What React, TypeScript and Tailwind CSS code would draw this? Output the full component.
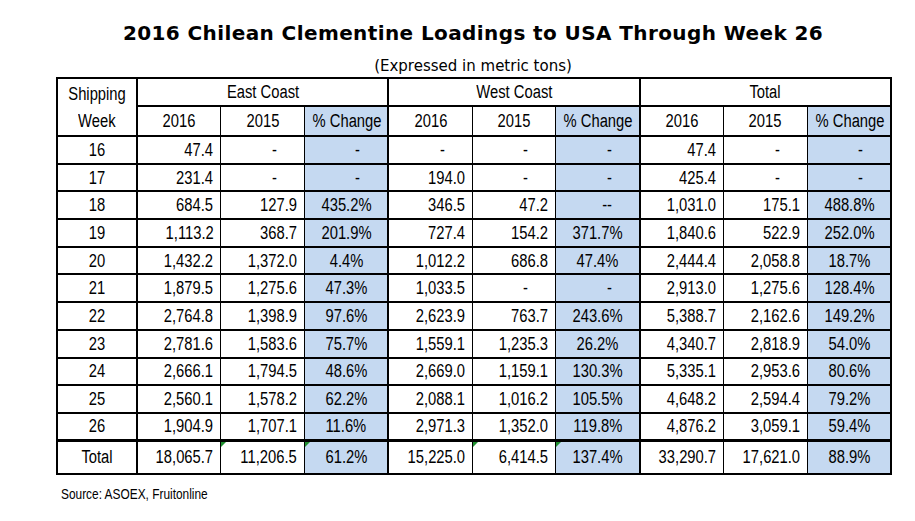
type Cell = string;
type Row = { week: string; east: Cell[]; west: Cell[]; total: Cell[] };

const rows: Row[] = [
  { week: "16", east: ["47.4", "-", "-"], west: ["-", "-", "-"], total: ["47.4", "-", "-"] },
  { week: "17", east: ["231.4", "-", "-"], west: ["194.0", "-", "-"], total: ["425.4", "-", "-"] },
  { week: "18", east: ["684.5", "127.9", "435.2%"], west: ["346.5", "47.2", "--"], total: ["1,031.0", "175.1", "488.8%"] },
  { week: "19", east: ["1,113.2", "368.7", "201.9%"], west: ["727.4", "154.2", "371.7%"], total: ["1,840.6", "522.9", "252.0%"] },
  { week: "20", east: ["1,432.2", "1,372.0", "4.4%"], west: ["1,012.2", "686.8", "47.4%"], total: ["2,444.4", "2,058.8", "18.7%"] },
  { week: "21", east: ["1,879.5", "1,275.6", "47.3%"], west: ["1,033.5", "-", "-"], total: ["2,913.0", "1,275.6", "128.4%"] },
  { week: "22", east: ["2,764.8", "1,398.9", "97.6%"], west: ["2,623.9", "763.7", "243.6%"], total: ["5,388.7", "2,162.6", "149.2%"] },
  { week: "23", east: ["2,781.6", "1,583.6", "75.7%"], west: ["1,559.1", "1,235.3", "26.2%"], total: ["4,340.7", "2,818.9", "54.0%"] },
  { week: "24", east: ["2,666.1", "1,794.5", "48.6%"], west: ["2,669.0", "1,159.1", "130.3%"], total: ["5,335.1", "2,953.6", "80.6%"] },
  { week: "25", east: ["2,560.1", "1,578.2", "62.2%"], west: ["2,088.1", "1,016.2", "105.5%"], total: ["4,648.2", "2,594.4", "79.2%"] },
  { week: "26", east: ["1,904.9", "1,707.1", "11.6%"], west: ["2,971.3", "1,352.0", "119.8%"], total: ["4,876.2", "3,059.1", "59.4%"] },
];

const totals: Row = {
  week: "Total",
  east: ["18,065.7", "11,206.5", "61.2%"],
  west: ["15,225.0", "6,414.5", "137.4%"],
  total: ["33,290.7", "17,621.0", "88.9%"],
};

const comic = "font-['DejaVu_Sans',sans-serif]";

// Arial Narrow isn't around, so squeeze Liberation Sans instead
function N({ children, align = "center" }: { children: React.ReactNode; align?: "left" | "right" | "center" }) {
  const origin = align === "right" ? "origin-right" : align === "left" ? "origin-left" : "origin-center";
  return <span className={`inline-block whitespace-nowrap scale-x-[0.82] ${origin}`}>{children}</span>;
}

function Flag() {
  // little green comment marker Excel puts in the corner
  return (
    <span className="absolute left-0 top-0 w-0 h-0 border-t-[5px] border-r-[5px] border-t-[#1f8f2f] border-r-transparent" />
  );
}

function DataCells({ vals, flags, last }: { vals: Cell[]; flags?: boolean; last?: boolean }) {
  const [a, b, pct] = vals;
  const isDash = (v: string) => v.startsWith("-");
  return (
    <>
      <td className={`border-l-2 border-l-black relative text-right ${isDash(a) ? "pr-[27px]" : "pr-[7px]"}`}>
        <N align="right">{a}</N>
      </td>
      <td className={`border-l border-l-black relative text-right ${isDash(b) ? "pr-[27px]" : "pr-[7px]"}`}>
        {flags && <Flag />}
        <N align="right">{b}</N>
      </td>
      <td
        className={`border-l border-l-black relative bg-[#c5d9f1] ${isDash(pct) ? "text-right pr-[27px]" : "text-center"} ${last ? "border-r-2 border-r-black" : ""}`}
      >
        {flags && <Flag />}
        <N align={isDash(pct) ? "right" : "center"}>{pct}</N>
      </td>
    </>
  );
}

function HeaderGroup() {
  return (
    <>
      <td className="text-center border-l-2 border-l-black"><N>2016</N></td>
      <td className="text-center border-l border-l-black"><N>2015</N></td>
      <td className="text-center border-l border-l-black bg-[#c5d9f1]"><N>% Change</N></td>
    </>
  );
}

export default function App() {
  return (
    <div className="w-[915px] h-[521px] bg-white text-black overflow-hidden">
      <div className="ml-[56px] w-[834px] pt-[18px]">
        <h1 className={`${comic} font-bold text-[20px] leading-[30px] text-center tracking-[0.4px]`}>
          2016 Chilean Clementine Loadings to USA Through Week 26
        </h1>
        <p className={`${comic} text-[15px] leading-[20px] text-center mt-[8px]`}>(Expressed in metric tons)</p>

        <table className="font-['Liberation_Sans',Arial,sans-serif] mt-px w-[834px] table-fixed border-collapse border-2 border-black text-[18px] leading-none">
          <colgroup>
            <col className="w-[80px]" />
            {Array.from({ length: 9 }).map((_, i) => (
              <col key={i} className="w-[83.8px]" />
            ))}
          </colgroup>
          <thead>
            <tr className="h-[28px]">
              <td className="text-center pt-[2px]"><N>Shipping</N></td>
              <td colSpan={3} className="text-center border-l-2 border-l-black border-b-2 border-b-black">
                <N>East Coast</N>
              </td>
              <td colSpan={3} className="text-center border-l-2 border-l-black border-b-2 border-b-black">
                <N>West Coast</N>
              </td>
              <td colSpan={3} className="text-center border-l-2 border-l-black border-b-2 border-b-black">
                <N>Total</N>
              </td>
            </tr>
            <tr className="h-[30px] border-b-2 border-b-black">
              <td className="text-center"><N>Week</N></td>
              <HeaderGroup />
              <HeaderGroup />
              <HeaderGroup />
            </tr>
          </thead>
          <tbody>
            {rows.map((r) => (
              <tr key={r.week} className="h-[27.7px] border-b-2 border-b-black">
                <td className="text-center"><N>{r.week}</N></td>
                <DataCells vals={r.east} />
                <DataCells vals={r.west} />
                <DataCells vals={r.total} last />
              </tr>
            ))}
            <tr className="h-[33px] border-t-[3px] border-t-black">
              <td className="text-center"><N>{totals.week}</N></td>
              <DataCells vals={totals.east} flags />
              <DataCells vals={totals.west} flags />
              <DataCells vals={totals.total} last />
            </tr>
          </tbody>
        </table>

        <p className="font-['Liberation_Sans',Arial,sans-serif] text-[14.5px] leading-[18px] ml-[5px] mt-[10px]">
          <N align="left">Source: ASOEX, Fruitonline</N>
        </p>
      </div>
    </div>
  );
}
